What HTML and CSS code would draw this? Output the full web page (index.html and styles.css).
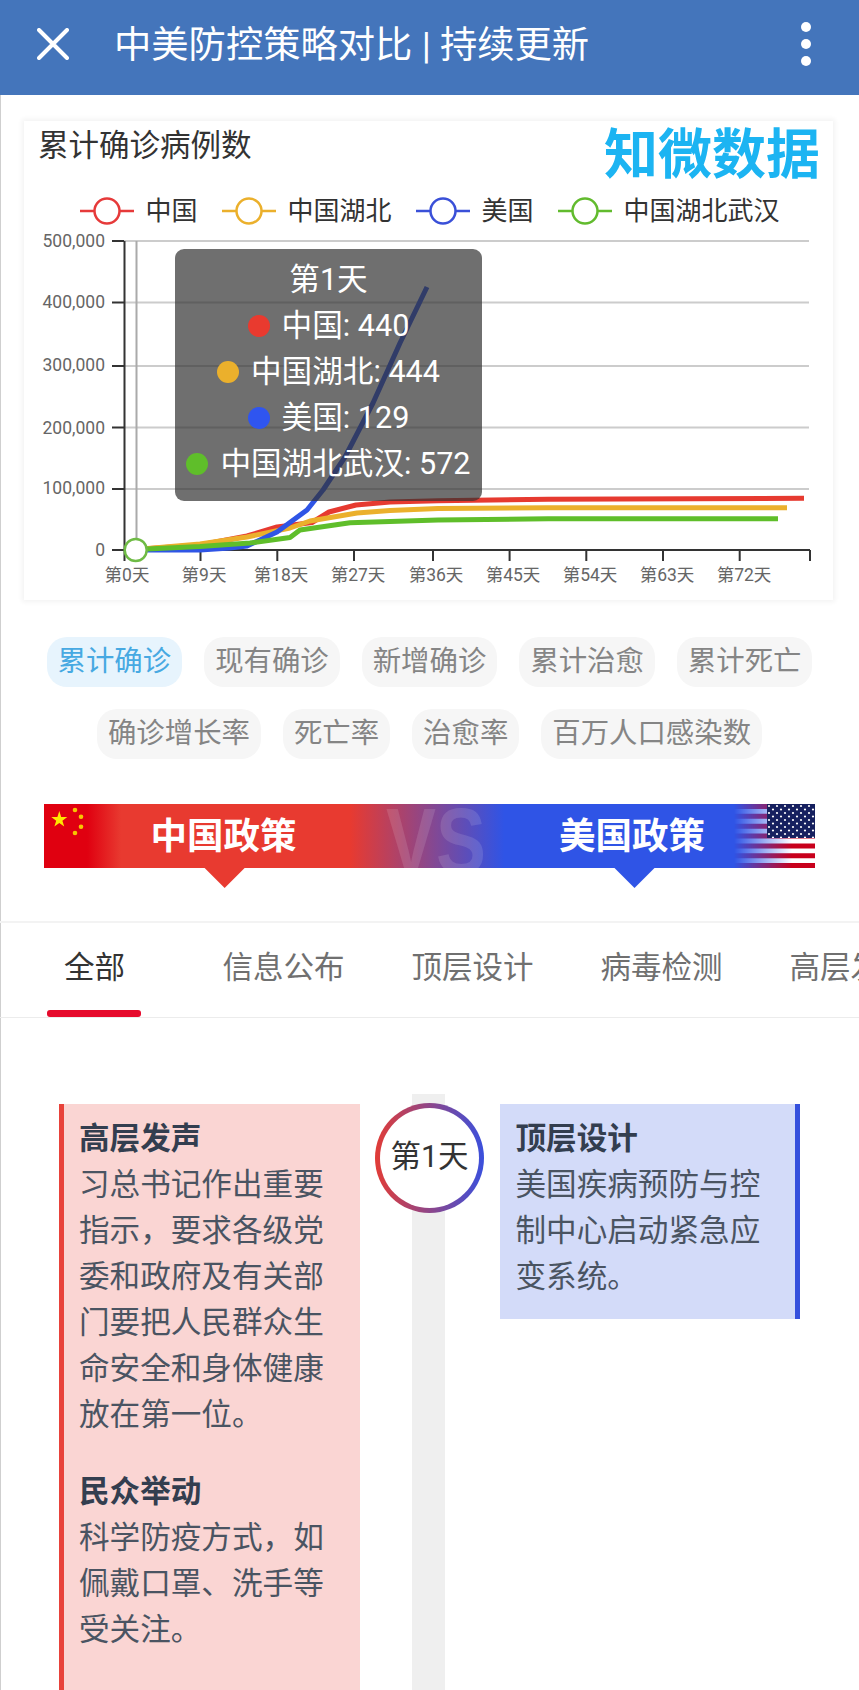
FILE: index.html
```html
<!DOCTYPE html>
<html lang="zh-CN">
<head>
<meta charset="utf-8">
<title>中美防控策略对比 | 持续更新</title>
<link rel="stylesheet" href="styles.css">
</head>
<body>
<div class="page">
  <header class="topbar">
    <svg class="close-icon" viewBox="0 0 32 32" aria-hidden="true"><path d="M2 2 30 30M30 2 2 30"/></svg>
    <h1 class="topbar-title">中美防控策略对比 | 持续更新</h1>
    <div class="menu-dots"><i></i><i></i><i></i></div>
  </header>

  <section class="chart-card">
    <div class="chart-head">
      <div class="chart-title">累计确诊病例数</div>
      <div class="logo">知微数据</div>
    </div>
    <div class="legend">
      <div class="legend-item"><svg class="legend-mark mark-red" viewBox="0 0 54 30"><path d="M0 15H54"/><circle cx="27" cy="15" r="12.5"/></svg><span>中国</span></div>
      <div class="legend-item"><svg class="legend-mark mark-yellow" viewBox="0 0 54 30"><path d="M0 15H54"/><circle cx="27" cy="15" r="12.5"/></svg><span>中国湖北</span></div>
      <div class="legend-item"><svg class="legend-mark mark-blue" viewBox="0 0 54 30"><path d="M0 15H54"/><circle cx="27" cy="15" r="12.5"/></svg><span>美国</span></div>
      <div class="legend-item"><svg class="legend-mark mark-green" viewBox="0 0 54 30"><path d="M0 15H54"/><circle cx="27" cy="15" r="12.5"/></svg><span>中国湖北武汉</span></div>
    </div>
    <svg class="plot" viewBox="24 234 810 363" width="810" height="363">
      <g class="grid">
        <path d="M124 241H809M124 302.5H809M124 366H809M124 427.5H809M124 489H809"/>
      </g>
      <path class="pointer" d="M136.5 241V550"/>
      <g class="axis">
        <path d="M124.5 241V561M112 550H810M112 241H124M112 302.5H124M112 366H124M112 427.5H124M112 489H124M200.5 550V561M277.3 550V561M354 550V561M433 550V561M509.6 550V561M586.3 550V561M663 550V561M739.7 550V561M810 550V561"/>
      </g>
      <g class="y-labels">
        <text x="105" y="247">500,000</text>
        <text x="105" y="307.5">400,000</text>
        <text x="105" y="371">300,000</text>
        <text x="105" y="433.5">200,000</text>
        <text x="105" y="494">100,000</text>
        <text x="105" y="556">0</text>
      </g>
      <g class="x-labels">
        <text x="127" y="581">第0天</text>
        <text x="204" y="581">第9天</text>
        <text x="281" y="581">第18天</text>
        <text x="358" y="581">第27天</text>
        <text x="436" y="581">第36天</text>
        <text x="513" y="581">第45天</text>
        <text x="590" y="581">第54天</text>
        <text x="667" y="581">第63天</text>
        <text x="744" y="581">第72天</text>
      </g>
      <polyline class="series s-red" points="136,549.5 200,545 247,536 277,527 312,522.5 329,512 356,505 390,502 438,500.7 548,499.3 804,498.3"/>
      <polyline class="series s-yellow" points="136,549.5 200,544 247,537 290,528 310,521 357,513 390,510.5 438,508.5 548,507.7 787,507.7"/>
      <polyline class="series s-blue" points="136,550 200,550 230,548 247,546 277,532 307,510 323,490 345,457 373,403 400,343 427,287"/>
      <polyline class="series s-green" points="136,549.5 200,546.5 250,543 290,537.5 300,530 350,522.7 438,520 548,518.7 778,518.7"/>
      <circle class="hover-dot" cx="135.7" cy="550" r="11"/>
    </svg>
    <div class="tooltip">
      <div class="tip-row">第1天</div>
      <div class="tip-row"><i class="tip-dot dot-red"></i>中国: 440</div>
      <div class="tip-row"><i class="tip-dot dot-yellow"></i>中国湖北: 444</div>
      <div class="tip-row"><i class="tip-dot dot-blue"></i>美国: 129</div>
      <div class="tip-row"><i class="tip-dot dot-green"></i>中国湖北武汉: 572</div>
    </div>
  </section>

  <nav class="chips">
    <span class="chip chip-active">累计确诊</span>
    <span class="chip">现有确诊</span>
    <span class="chip">新增确诊</span>
    <span class="chip">累计治愈</span>
    <span class="chip">累计死亡</span>
    <span class="chip">确诊增长率</span>
    <span class="chip">死亡率</span>
    <span class="chip">治愈率</span>
    <span class="chip">百万人口感染数</span>
  </nav>

  <svg class="versus" viewBox="44 804 771 85" width="771" height="85">
    <defs>
      <linearGradient id="vsGrad" gradientUnits="userSpaceOnUse" x1="44" y1="0" x2="815" y2="0">
        <stop offset="0" stop-color="#e00010"/>
        <stop offset=".056" stop-color="#e00010"/>
        <stop offset=".1" stop-color="#e83a30"/>
        <stop offset=".397" stop-color="#e83a30"/>
        <stop offset=".597" stop-color="#2f54e6"/>
        <stop offset="1" stop-color="#2f54e6"/>
      </linearGradient>
      <linearGradient id="fadeGrad" gradientUnits="userSpaceOnUse" x1="734" y1="0" x2="792" y2="0">
        <stop offset="0" stop-color="#000"/>
        <stop offset="1" stop-color="#fff"/>
      </linearGradient>
      <mask id="fadeMask" maskUnits="userSpaceOnUse" x="734" y="804" width="81" height="64">
        <rect x="734" y="804" width="81" height="64" fill="url(#fadeGrad)"/>
      </mask>
      <pattern id="usStars" patternUnits="userSpaceOnUse" x="767" y="804" width="8" height="7">
        <circle cx="2" cy="2" r="1.1" fill="#fff"/>
        <circle cx="6" cy="5.5" r="1.1" fill="#fff"/>
      </pattern>
      <clipPath id="vsClip"><rect x="44" y="804" width="771" height="64"/></clipPath>
    </defs>
    <rect x="44" y="804" width="771" height="64" fill="url(#vsGrad)"/>
    <polygon points="204.6,868 244.6,868 224.6,888" fill="#e83a30"/>
    <polygon points="614.5,868 654.5,868 634.5,888" fill="#2f54e6"/>
    <g clip-path="url(#vsClip)">
      <text class="vs-mark" x="436" y="873" textLength="100" lengthAdjust="spacingAndGlyphs">VS</text>
    </g>
    <polygon fill="#ffe600" points="59.3,811 61.2,817 67.3,817 62.4,820.7 64.2,826.6 59.3,823 54.4,826.6 56.2,820.7 51.3,817 57.4,817"/>
    <g fill="#f7c500">
      <circle cx="75" cy="810" r="2.3"/><circle cx="81" cy="816.7" r="2.3"/><circle cx="81" cy="826.7" r="2.3"/><circle cx="75" cy="833" r="2.3"/>
    </g>
    <g mask="url(#fadeMask)">
      <rect x="734" y="804" width="81" height="64" fill="#fff"/>
      <path fill="#c8001c" d="M734 804h81v5h-81zM734 813.8h81v5h-81zM734 823.7h81v5h-81zM734 833.5h81v5h-81zM734 843.4h81v5h-81zM734 853.2h81v5h-81zM734 863h81v5h-81z"/>
    </g>
    <rect x="767" y="804" width="48" height="34" fill="#16205f"/>
    <rect x="767" y="804" width="48" height="34" fill="url(#usStars)"/>
    <text class="vs-title" x="223.5" y="849">中国政策</text>
    <text class="vs-title" x="632" y="849">美国政策</text>
  </svg>

  <div class="tabs">
    <div class="tab tab-active"><span>全部</span><i class="tab-bar"></i></div>
    <div class="tab"><span>信息公布</span></div>
    <div class="tab"><span>顶层设计</span></div>
    <div class="tab"><span>病毒检测</span></div>
    <div class="tab"><span>高层发声</span></div>
  </div>

  <main class="timeline">
    <article class="card card-cn">
      <h2 class="card-title">高层发声</h2>
      <p class="card-text">习总书记作出重要指示，要求各级党委和政府及有关部门要把人民群众生命安全和身体健康放在第一位。</p>
      <h2 class="card-title card-title-next">民众举动</h2>
      <p class="card-text">科学防疫方式，如佩戴口罩、洗手等受关注。</p>
    </article>
    <div class="axis-col">
      <div class="axis-bar"></div>
      <div class="day-badge">第1天</div>
    </div>
    <article class="card card-us">
      <h2 class="card-title">顶层设计</h2>
      <p class="card-text">美国疾病预防与控制中心启动紧急应变系统。</p>
    </article>
  </main>
</div>
</body>
</html>
```

FILE: styles.css
```css
* { box-sizing: border-box; }
html, body {
  margin: 0;
  height: 1690px;
  overflow: hidden;
  background: #fff;
}
body, svg text {
  font-family: Roboto, "Noto Sans CJK SC", sans-serif;
}
.page {
  display: flex;
  flex-direction: column;
  height: 1690px;
  box-shadow: inset 1px 0 #cfcfcf;
  color: #333;
}

/* top bar */
.topbar {
  flex: none;
  display: flex;
  align-items: center;
  height: 95px;
  padding: 0 48px 7px 37px;
  background: #4475bb;
  color: #fff;
}
.close-icon {
  flex: none;
  width: 32px;
  height: 32px;
  fill: none;
  stroke: #fff;
  stroke-width: 4;
  stroke-linecap: round;
}
.topbar-title {
  flex: 1;
  margin: 1.5px 0 0 45px;
  font-size: 37.3px;
  font-weight: 400;
  line-height: 48px;
  white-space: nowrap;
}
.menu-dots {
  display: flex;
  flex-direction: column;
  gap: 7px;
}
.menu-dots i {
  display: block;
  width: 10px;
  height: 10px;
  border-radius: 50%;
  background: #fff;
}

/* chart card */
.chart-card {
  position: relative;
  flex: none;
  margin: 26px 26px 0 24px;
  height: 478.5px;
  background: #fff;
  box-shadow: 0 0 5px 2px #f3f3f3;
}
.chart-head {
  display: flex;
  justify-content: space-between;
  align-items: flex-start;
  height: 75px;
  padding: 7px 13px 0 14px;
}
.chart-title {
  font-size: 30.5px;
  line-height: 36px;
  color: #333;
}
.logo {
  margin-top: 2px;
  font-size: 54px;
  line-height: 51px;
  font-weight: 700;
  color: #1cb4f2;
}
.legend {
  display: flex;
  gap: 24px;
  height: 30px;
  margin-bottom: 8px;
  padding-left: 55.5px;
}
.legend-item {
  display: flex;
  align-items: center;
  gap: 12px;
  font-size: 26px;
  line-height: 30px;
  color: #333;
}
.legend-mark {
  width: 54px;
  height: 30px;
  fill: #fff;
  stroke-width: 2.5;
}
.mark-red { stroke: #e63a3a; }
.mark-yellow { stroke: #ebb02c; }
.mark-blue { stroke: #3a50d8; }
.mark-green { stroke: #62bb2e; }
.plot { display: block; }
.grid path { fill: none; stroke: #ccc; stroke-width: 2; }
.pointer { fill: none; stroke: #aaa; stroke-width: 2; }
.axis path { fill: none; stroke: #333; stroke-width: 2; }
.y-labels text { font-size: 17.5px; fill: #666; text-anchor: end; }
.x-labels text { font-size: 17.5px; fill: #666; text-anchor: middle; }
.series { fill: none; stroke-width: 5; stroke-linejoin: round; }
.s-red { stroke: #e63a30; }
.s-yellow { stroke: #ebb02c; }
.s-blue { stroke: #2f55e6; }
.s-green { stroke: #5fbe2a; }
.hover-dot { fill: #fff; stroke: #6fbb45; stroke-width: 2.5; }

.tooltip {
  position: absolute;
  left: 151px;
  top: 128px;
  width: 307px;
  height: 252px;
  padding-top: 5px;
  border-radius: 9px;
  background: rgba(50, 50, 50, .7);
  color: #fff;
  font-size: 30.6px;
}
.tip-row {
  display: flex;
  align-items: center;
  justify-content: center;
  height: 46px;
  white-space: nowrap;
}
.tip-dot {
  flex: none;
  width: 22px;
  height: 22px;
  margin: 5px 12px 0 0;
  border-radius: 50%;
}
.dot-red { background: #e93a2f; }
.dot-yellow { background: #ebb02c; }
.dot-blue { background: #2f55f0; }
.dot-green { background: #5fbe2a; }

/* metric chips */
.chips {
  flex: none;
  display: flex;
  flex-wrap: wrap;
  justify-content: center;
  gap: 22px;
  margin-top: 37.5px;
}
.chip {
  height: 50px;
  padding: 0 11px;
  border-radius: 20px;
  background: #f6f6f6;
  color: #858585;
  font-size: 28.4px;
  line-height: 50px;
}
.chip-active {
  background: #e7f4fd;
  color: #47a9e2;
}

/* versus banner */
.versus {
  flex: none;
  display: block;
  margin: 45px 0 0 44px;
}
.vs-mark {
  font-family: "Liberation Sans", sans-serif;
  font-size: 92px;
  font-weight: 700;
  fill: rgba(255, 255, 255, .12);
  text-anchor: middle;
}
.vs-title {
  font-size: 36.5px;
  font-weight: 700;
  fill: #fff;
  text-anchor: middle;
}

/* tabs */
.tabs {
  flex: none;
  display: flex;
  height: 97px;
  margin-top: 32px;
  border-top: 2px solid #f3f3f3;
  border-bottom: 1px solid #ececec;
  overflow: hidden;
}
.tab {
  flex: 0 0 189px;
  display: flex;
  flex-direction: column;
  align-items: center;
  padding-top: 23px;
  color: #707070;
  font-size: 30.5px;
  line-height: 44px;
  white-space: nowrap;
}
.tab-active { color: #333; }
.tab-bar {
  display: block;
  width: 94px;
  height: 7px;
  margin: auto 2px 0 0;
  border-radius: 3px;
  background: #e60a2c;
}

/* timeline */
.timeline {
  flex: 1;
  display: grid;
  grid-template-columns: 300.5px 140.5px 300px;
  margin-top: 76px;
  padding-left: 59px;
  min-height: 0;
}
.card {
  margin-top: 10px;
  color: #4a5462;
  font-size: 30.6px;
  line-height: 46px;
}
.card-cn {
  padding: 12px 35px 0 15px;
  border-left: 5px solid #e8423a;
  background: #fad5d3;
}
.card-us {
  align-self: start;
  padding: 12px 34px 18.5px 15.5px;
  border-right: 5px solid #3550dd;
  background: #d3dbf9;
}
.card-title {
  margin: 0;
  color: #333e4f;
  font-size: 30.6px;
  font-weight: 700;
  line-height: 46px;
}
.card-title-next { margin-top: 31px; }
.card-text { margin: 0; }
.axis-col {
  position: relative;
  display: flex;
  justify-content: center;
}
.axis-bar {
  width: 33px;
  margin-right: 2.5px;
  background: #efefef;
}
.day-badge {
  position: absolute;
  top: 9px;
  left: 15.5px;
  display: flex;
  align-items: center;
  justify-content: center;
  width: 109px;
  height: 110px;
  padding-bottom: 2px;
  border: 5px solid transparent;
  border-radius: 50%;
  background: linear-gradient(#fff, #fff) padding-box,
              linear-gradient(90deg, #e23c36, #3a50dd) border-box;
  color: #333;
  font-size: 30.5px;
  line-height: 46px;
}
```
